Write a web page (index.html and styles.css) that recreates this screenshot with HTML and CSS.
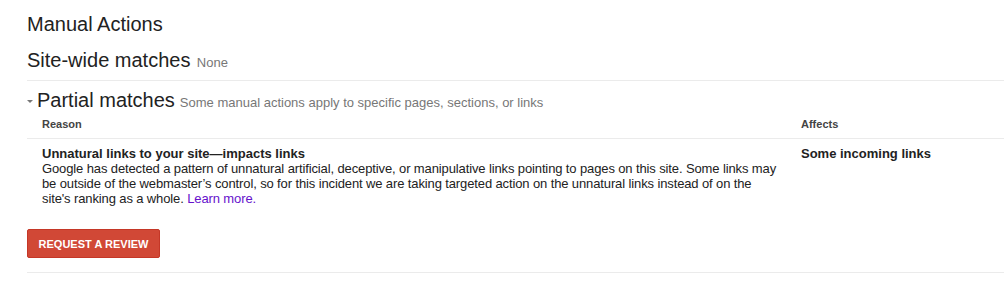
FILE: index.html
```html
<!DOCTYPE html>
<html>
<head>
<meta charset="utf-8">
<link rel="stylesheet" href="styles.css">
</head>
<body>
<div class="page">
  <h1 class="title">Manual Actions</h1>
  <div class="section sitewide">
    <span class="heading">Site-wide matches</span>
    <span class="note">None</span>
  </div>
  <div class="section partial">
    <div class="partial-head">
      <span class="caret"></span>
      <span class="heading">Partial matches</span>
      <span class="note">Some manual actions apply to specific pages, sections, or links</span>
    </div>
    <div class="table">
      <div class="row head-row">
        <div class="cell reason">Reason</div>
        <div class="cell affects">Affects</div>
      </div>
      <div class="row body-row">
        <div class="cell reason">
          <div class="issue">Unnatural links to your site—impacts links</div>
          <div class="desc">Google has detected a pattern of unnatural artificial, deceptive, or manipulative links pointing to pages on this site. Some links may be outside of the webmaster’s control, so for this incident we are taking targeted action on the unnatural links instead of on the site's ranking as a whole. <a class="learn" href="#">Learn more.</a></div>
        </div>
        <div class="cell affects strong">Some incoming links</div>
      </div>
    </div>
    <div class="actions">
      <button class="btn-review">REQUEST A REVIEW</button>
    </div>
  </div>
</div>
</body>
</html>
```

FILE: styles.css
```css
html, body {
  margin: 0;
  padding: 0;
  background: #fff;
}
body {
  font-family: "Liberation Sans", Arial, sans-serif;
  color: #222;
}
.page {
  padding: 0 3px 0 27px;
}
.title {
  margin: 12px 0 0 0;
  font-size: 20px;
  line-height: 24px;
  font-weight: normal;
  color: #222;
}
.heading {
  font-size: 20px;
  line-height: 24px;
  color: #222;
}
.note {
  font-size: 13px;
  color: #777;
  margin-left: 2px;
}
.sitewide {
  margin-top: 12px;
  padding-bottom: 8px;
  border-bottom: 1px solid #ebebeb;
}
.partial {
  padding-top: 7px;
  padding-bottom: 14px;
  border-bottom: 1px solid #ebebeb;
}
.partial-head {
  display: flex;
  align-items: baseline;
  gap: 2px;
}
.partial-head .note {
  margin-left: 3px;
}
.caret {
  display: inline-block;
  width: 0;
  height: 0;
  border-left: 3px solid transparent;
  border-right: 3px solid transparent;
  border-top: 3px solid #777;
  margin-right: 2px;
  align-self: center;
  position: relative;
  top: 1px;
}
.table {
  margin-top: 6px;
}
.row {
  display: grid;
  grid-template-columns: 774px 1fr;
}
.cell.reason {
  padding-left: 15px;
  padding-right: 23px;
}
.head-row {
  font-size: 11px;
  line-height: 13px;
  font-weight: bold;
  color: #444;
  padding-bottom: 7px;
  border-bottom: 1px solid #ebebeb;
}
.body-row {
  padding-top: 7px;
  font-size: 13px;
  line-height: 15px;
  color: #222;
}
.issue {
  font-weight: bold;
}
.desc {
  letter-spacing: -0.12px;
}
.strong {
  font-weight: bold;
}
.learn {
  color: #61c;
  text-decoration: none;
}
.actions {
  margin-top: 23px;
}
.btn-review {
  display: block;
  width: 133px;
  height: 29px;
  padding: 0;
  border: 1px solid #c53727;
  border-radius: 2px;
  background: #d14836;
  color: #fff;
  font-family: "Liberation Sans", Arial, sans-serif;
  font-size: 11px;
  font-weight: bold;
  letter-spacing: 0;
}
```
